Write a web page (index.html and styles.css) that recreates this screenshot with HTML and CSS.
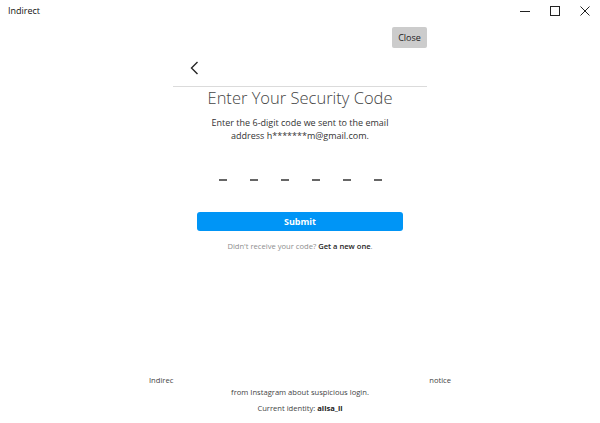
FILE: index.html
```html
<!DOCTYPE html>
<html>
<head>
<meta charset="utf-8">
<link rel="stylesheet" href="styles.css">
</head>
<body>
<div class="page">
  <div class="titlebar">
    <span class="app-title">Indirect</span>
    <div class="controls">
      <span class="ctl"><svg width="10" height="10" viewBox="0 0 10 10"><path d="M0 5.5H10" stroke="#222" stroke-width="1"/></svg></span>
      <span class="ctl"><svg width="10" height="10" viewBox="0 0 10 10"><rect x="0.5" y="0.5" width="9" height="9" fill="none" stroke="#222" stroke-width="1"/></svg></span>
      <span class="ctl"><svg width="10" height="10" viewBox="0 0 10 10"><path d="M0.5 0.5L9.5 9.5M9.5 0.5L0.5 9.5" stroke="#222" stroke-width="1"/></svg></span>
    </div>
  </div>
  <div class="main">
    <div class="close-row"><button class="close-btn">Close</button></div>
    <div class="header">
      <svg class="back" width="9" height="14" viewBox="0 0 9 14"><path d="M7.5 1L1.5 7L7.5 13" fill="none" stroke="#262626" stroke-width="1.4"/></svg>
    </div>
    <h1 class="title">Enter Your Security Code</h1>
    <p class="desc">Enter the 6-digit code we sent to the email<br>address h*******m@gmail.com.</p>
    <div class="code">
      <span class="dash"></span><span class="dash"></span><span class="dash"></span><span class="dash"></span><span class="dash"></span><span class="dash"></span>
    </div>
    <button class="submit">Submit</button>
    <p class="resend">Didn't receive your code? <b>Get a new one</b>.</p>
  </div>
  <div class="footer">
    <div class="foot-split"><span>Indirec</span><span>notice</span></div>
    <div class="foot-line">from Instagram about suspicious login.</div>
    <div class="foot-id">Current identity: <b>ailsa_ii</b></div>
  </div>
</div>
</body>
</html>
```
FILE: styles.css
```css
html, body {
  margin: 0;
  padding: 0;
  background: #fff;
}
.page {
  height: 423px;
  display: flex;
  flex-direction: column;
  font-family: "Open Sans", "Noto Sans", sans-serif;
  color: #262626;
}
.titlebar {
  height: 22px;
  display: flex;
  align-items: center;
  justify-content: space-between;
  padding-left: 8px;
}
.app-title {
  font-size: 9px;
  color: #111;
  margin-top: -1px;
}
.controls {
  display: flex;
  height: 22px;
}
.ctl {
  width: 30px;
  display: flex;
  align-items: center;
  justify-content: center;
}
.main {
  width: 254px;
  margin: 0 auto;
  display: flex;
  flex-direction: column;
  align-items: center;
}
.close-row {
  align-self: stretch;
  display: flex;
  justify-content: flex-end;
  margin-top: 5px;
}
.close-btn {
  width: 35px;
  height: 21px;
  border: none;
  border-radius: 2px;
  background: #cccccc;
  font-family: "Open Sans", sans-serif;
  font-size: 9px;
  color: #222;
  padding: 0;
}
.header {
  align-self: stretch;
  height: 39px;
  border-bottom: 1px solid #dbdbdb;
  display: flex;
  align-items: flex-start;
  padding-left: 17px;
  box-sizing: border-box;
}
.back {
  margin-top: 13px;
}
.title {
  margin: 0;
  font-weight: 300;
  font-size: 16.5px;
  color: #444;
  line-height: 22px;
}
.desc {
  margin: 7px 0 0;
  font-size: 9px;
  line-height: 13px;
  text-align: center;
  color: #333;
}
.code {
  display: flex;
  gap: 23px;
  margin-top: 37px;
}
.dash {
  width: 8px;
  height: 2px;
  background: #666;
}
.submit {
  margin-top: 31px;
  width: 206px;
  height: 19px;
  border: none;
  border-radius: 3px;
  background: #0095f6;
  color: #fff;
  font-family: "Open Sans", sans-serif;
  font-weight: 700;
  font-size: 9px;
  padding: 0;
}
.resend {
  margin: 10px 0 0;
  font-size: 7.6px;
  color: #8e8e8e;
}
.resend b {
  color: #262626;
  font-weight: 600;
}
.footer {
  margin-top: auto;
  margin-bottom: 9px;
  display: flex;
  flex-direction: column;
  align-items: center;
  font-size: 7.6px;
  color: #444;
}
.foot-split {
  width: 302px;
  display: flex;
  justify-content: space-between;
  line-height: 12px;
}
.foot-line {
  line-height: 12px;
}
.foot-id {
  margin-top: 4px;
  line-height: 12px;
}
.foot-id b {
  color: #222;
}
```
